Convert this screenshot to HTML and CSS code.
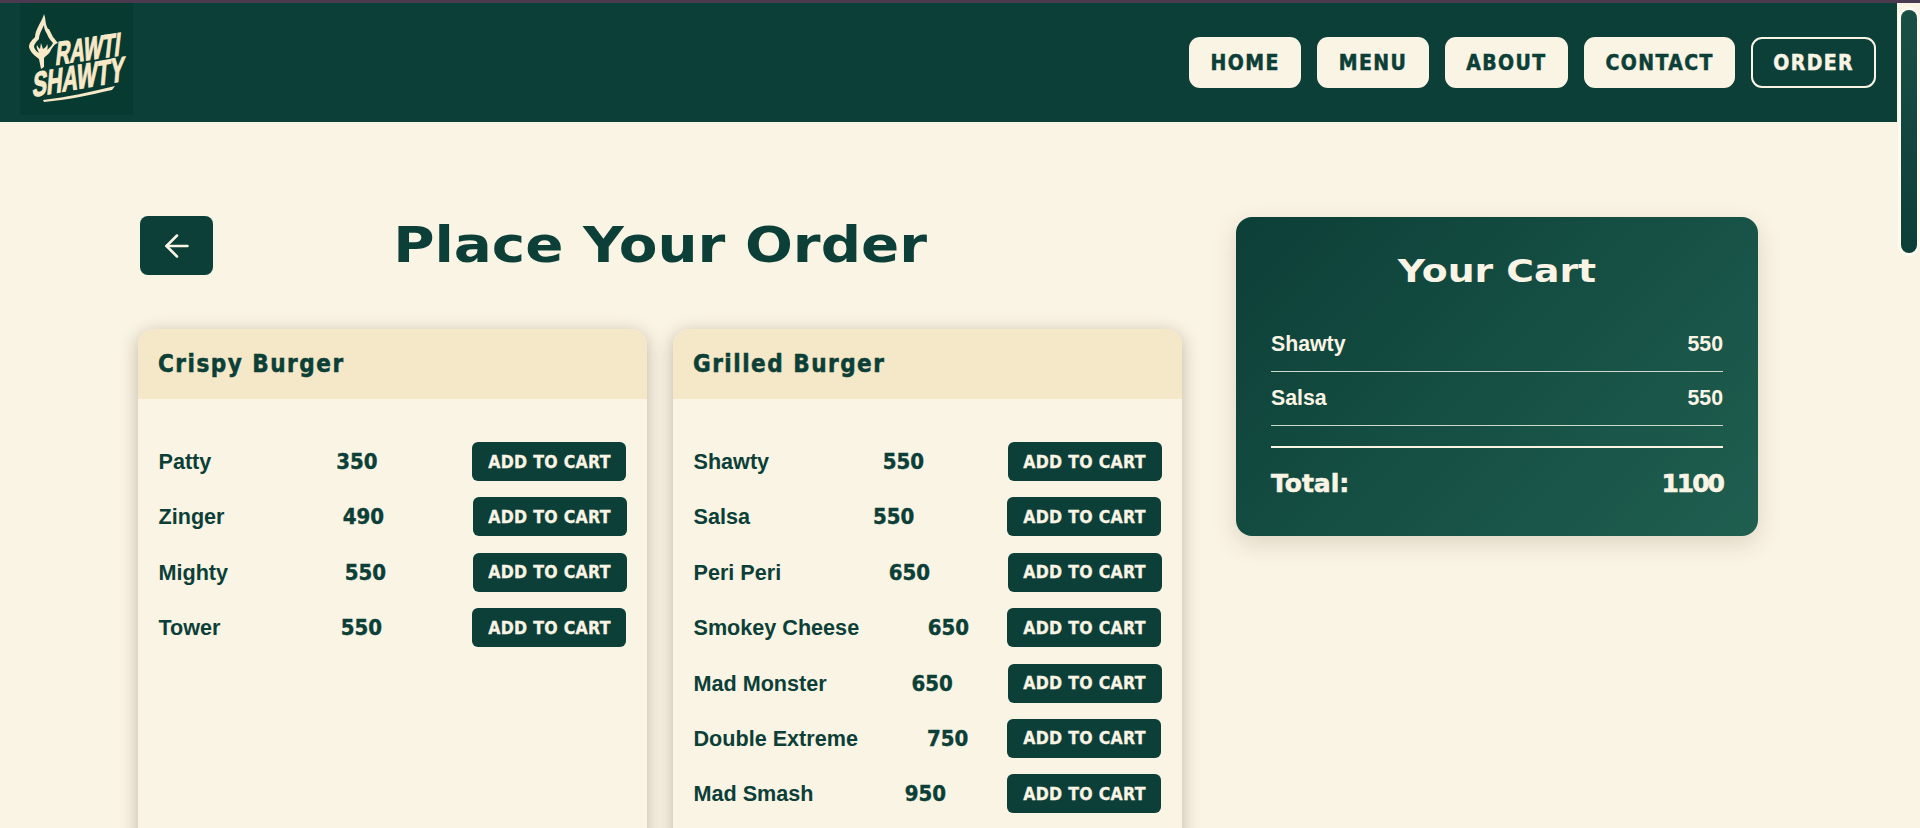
FILE: index.html
```html
<!DOCTYPE html>
<html lang="en">
<head>
    <meta charset="UTF-8">
    <meta name="viewport" content="width=device-width, initial-scale=1.0">
    <title>Rawti Shawty - Order</title>
    <link rel="stylesheet" href="styles.css">
</head>
<body>
    <div class="top-strip"></div>
    <div class="window">
        <div class="page">
            <header class="site-header">
                <a class="logo" href="#">
                    <svg viewBox="0 0 113 112" width="113" height="112">
                        <path class="logo-ink" fill-rule="evenodd" d="M24 11C26 16 25 20 27 24C28 26 28 26 29 26C31 30 32 32 33 34C35 36 36 38 38 40C34 41 32 45 30 49C28 52 25 53 24 55L24 64L21 66L19 56C15 53 10 49 9 44C9 40 12 37 15 34C15 30 17 26 19 22C21 18 23 15 24 11ZM24 22C22 27 19 31 19 36C17 38 14 41 14 44C15 47 17 49 19 50C18 47 16 45 17 42C18 44 19 45 20 46L21 40L23 46C25 45 27 43 27 41C28 43 28 45 27 47C30 45 32 42 33 40C30 37 28 34 27 31C25 28 24 25 24 22Z"/>
                        <text class="logo-text" transform="translate(35 62) rotate(-8.5) skewX(-15) scale(0.63 1)">RAWTI</text>
                        <text class="logo-text logo-text-big" transform="translate(12 94) rotate(-10) skewX(-15) scale(0.64 1)">SHAWTY</text>
                        <path class="logo-ink" d="M23 97c24-3 48-8 72-14l-3 4c-22 5-45 10-68 12z"/>
                    </svg>
                </a>
                <nav class="nav">
                    <a class="nav-btn" href="#">HOME</a>
                    <a class="nav-btn" href="#">MENU</a>
                    <a class="nav-btn" href="#">ABOUT</a>
                    <a class="nav-btn" href="#">CONTACT</a>
                    <a class="nav-btn nav-btn-outline" href="#">ORDER</a>
                </nav>
            </header>

            <main class="order-layout">
                <section class="order-left">
                    <div class="order-head">
                        <button class="back-btn" type="button" aria-label="Back">
                            <svg viewBox="0 0 24 24" width="36" height="36" fill="none" stroke="currentColor" stroke-width="1.7" stroke-linecap="round" stroke-linejoin="round">
                                <path d="M19 12H5"/>
                                <path d="M12 5l-7 7 7 7"/>
                            </svg>
                        </button>
                        <h1>Place Your Order</h1>
                    </div>

                    <div class="menu-grid">
                        <article class="menu-card">
                            <h2 class="menu-card-head">Crispy Burger</h2>
                            <div class="menu-card-body">
                                <div class="item"><span class="item-name">Patty</span><span class="item-price">350</span><button class="add-btn" type="button">ADD TO CART</button></div>
                                <div class="item"><span class="item-name">Zinger</span><span class="item-price">490</span><button class="add-btn" type="button">ADD TO CART</button></div>
                                <div class="item"><span class="item-name">Mighty</span><span class="item-price">550</span><button class="add-btn" type="button">ADD TO CART</button></div>
                                <div class="item"><span class="item-name">Tower</span><span class="item-price">550</span><button class="add-btn" type="button">ADD TO CART</button></div>
                            </div>
                        </article>
                        <article class="menu-card">
                            <h2 class="menu-card-head">Grilled Burger</h2>
                            <div class="menu-card-body">
                                <div class="item"><span class="item-name">Shawty</span><span class="item-price">550</span><button class="add-btn" type="button">ADD TO CART</button></div>
                                <div class="item"><span class="item-name">Salsa</span><span class="item-price">550</span><button class="add-btn" type="button">ADD TO CART</button></div>
                                <div class="item"><span class="item-name">Peri Peri</span><span class="item-price">650</span><button class="add-btn" type="button">ADD TO CART</button></div>
                                <div class="item"><span class="item-name">Smokey Cheese</span><span class="item-price">650</span><button class="add-btn" type="button">ADD TO CART</button></div>
                                <div class="item"><span class="item-name">Mad Monster</span><span class="item-price">650</span><button class="add-btn" type="button">ADD TO CART</button></div>
                                <div class="item"><span class="item-name">Double Extreme</span><span class="item-price">750</span><button class="add-btn" type="button">ADD TO CART</button></div>
                                <div class="item"><span class="item-name">Mad Smash</span><span class="item-price">950</span><button class="add-btn" type="button">ADD TO CART</button></div>
                            </div>
                        </article>
                    </div>
                </section>

                <aside class="cart">
                    <h2>Your Cart</h2>
                    <div class="cart-row"><span>Shawty</span><span>550</span></div>
                    <div class="cart-row"><span>Salsa</span><span>550</span></div>
                    <div class="cart-total"><span>Total:</span><span class="cart-total-value">1100</span></div>
                </aside>
            </main>
        </div>
        <div class="scroll-rail"><div class="scroll-thumb"></div></div>
    </div>
</body>
</html>
```

FILE: styles.css
```css
* {
    box-sizing: border-box;
}
html, body {
    height: 100%;
}
body {
    margin: 0;
    overflow: hidden;
    background: #faf4e5;
    color: #0c3f37;
    font-family: "Liberation Sans", Arial, sans-serif;
}
.top-strip {
    height: 3px;
    background: #4a3a50;
}
.window {
    display: flex;
    height: 825px;
}
.page {
    flex: 1;
    min-width: 0;
    overflow: hidden;
}
.scroll-rail {
    width: 23px;
    padding: 3px;
}
.scroll-thumb {
    width: 16px;
    height: 243px;
    margin: 4px auto 0;
    border-radius: 8px;
    background: linear-gradient(180deg, #1a4f44, #0c3f37);
    box-shadow: 0 0 0 3px #fffaf0;
}

/* header */
.site-header {
    display: flex;
    justify-content: space-between;
    align-items: flex-start;
    height: 119px;
    padding: 0 21px 0 20px;
    background: #0c3f37;
}
.logo {
    display: block;
    width: 113px;
    height: 112px;
    background: #073b31;
}
.logo-ink {
    fill: #f8e9c8;
}
.logo-text {
    fill: #f8e9c8;
    stroke: #f8e9c8;
    stroke-width: 1.2px;
    font-family: "Liberation Sans", Arial, sans-serif;
    font-weight: 700;
    font-size: 32px;
}
.logo-text-big {
    font-size: 34px;
}
.nav {
    display: flex;
    gap: 16px;
    margin-top: 34px;
}
.nav-btn {
    display: flex;
    align-items: center;
    justify-content: center;
    height: 51px;
    padding: 0 21.5px;
    border-radius: 11px;
    background: #faf4e5;
    color: #0c3f37;
    font-family: "DejaVu Sans Condensed", "DejaVu Sans", sans-serif;
    font-size: 21px;
    font-weight: 700;
    letter-spacing: 1.4px;
    -webkit-text-stroke: 0.5px;
    text-decoration: none;
}
.nav-btn-outline {
    padding: 0 20px;
    background: transparent;
    border: 2px solid #faf4e5;
    color: #faf4e5;
}

/* main layout */
.order-layout {
    display: grid;
    grid-template-columns: 1045px 522px;
    gap: 53px;
    margin-left: 138px;
    padding-top: 94px;
}
.order-head {
    display: grid;
    grid-template-columns: 1fr auto 1fr;
    align-items: center;
    margin-bottom: 54px;
}
.order-head h1 {
    margin: 0;
    font-family: "DejaVu Sans", sans-serif;
    font-size: 49px;
    font-weight: 700;
    white-space: nowrap;
    transform: scaleX(1.15);
}
.back-btn {
    display: flex;
    align-items: center;
    justify-content: center;
    width: 73px;
    height: 59px;
    margin-left: 2px;
    border: 0;
    border-radius: 8px;
    background: #0c3f37;
    color: #faf4e5;
    cursor: pointer;
}

/* menu cards */
.menu-grid {
    display: grid;
    grid-template-columns: 509px 509px;
    gap: 26px;
}
.menu-card {
    min-height: 900px;
    border-radius: 16px;
    background: #faf4e5;
    box-shadow: 0 4px 18px rgba(60, 40, 10, 0.3);
}
.menu-card-head {
    height: 70px;
    margin: 0;
    padding: 0 20px;
    border-radius: 16px 16px 0 0;
    background: #f5e8c8;
    font-family: "DejaVu Sans Condensed", "DejaVu Sans", sans-serif;
    font-size: 24px;
    font-weight: 700;
    letter-spacing: 1.5px;
    -webkit-text-stroke: 0.5px;
    line-height: 70px;
}
.menu-card-body {
    padding: 43px 20.5px 20px;
}
.item {
    display: flex;
    justify-content: space-between;
    align-items: center;
    margin-bottom: 16.4px;
}
.item-name {
    padding-top: 1px;
    font-size: 21.6px;
    font-weight: 700;
}
.item-price {
    margin-left: 30px;
    font-family: "DejaVu Sans Condensed", "DejaVu Sans", sans-serif;
    font-size: 22px;
    font-weight: 700;
    -webkit-text-stroke: 0.4px;
}
.add-btn {
    flex-shrink: 0;
    width: 154px;
    height: 39px;
    padding: 0;
    border: 0;
    border-radius: 6px;
    background: #0c3f37;
    color: #faf4e5;
    font-family: "DejaVu Sans Condensed", "DejaVu Sans", sans-serif;
    font-size: 17.5px;
    font-weight: 700;
    letter-spacing: 0.3px;
    -webkit-text-stroke: 0.3px;
    cursor: pointer;
}

/* cart */
.cart {
    height: 319px;
    margin-top: 1px;
    padding: 33px 35px;
    border-radius: 16px;
    background: linear-gradient(135deg, #0c3f37, #1f5f50);
    box-shadow: 0 8px 24px rgba(60, 40, 10, 0.15);
    color: #faf4e5;
}
.cart h2 {
    margin: 0 0 26px;
    font-family: "DejaVu Sans", sans-serif;
    font-size: 32px;
    font-weight: 700;
    line-height: 42px;
    text-align: center;
    transform: scaleX(1.18);
}
.cart-row {
    display: flex;
    justify-content: space-between;
    align-items: center;
    height: 54px;
    border-bottom: 1px solid #cfd9c9;
    font-size: 21.3px;
    font-weight: 700;
}
.cart-total {
    display: flex;
    justify-content: space-between;
    margin-top: 20px;
    padding-top: 21px;
    border-top: 2px solid #faf4e5;
    font-family: "DejaVu Sans", sans-serif;
    font-size: 25px;
    font-weight: 700;
    -webkit-text-stroke: 0.6px;
    line-height: 30px;
}
.cart-total-value {
    letter-spacing: -2px;
}
```
